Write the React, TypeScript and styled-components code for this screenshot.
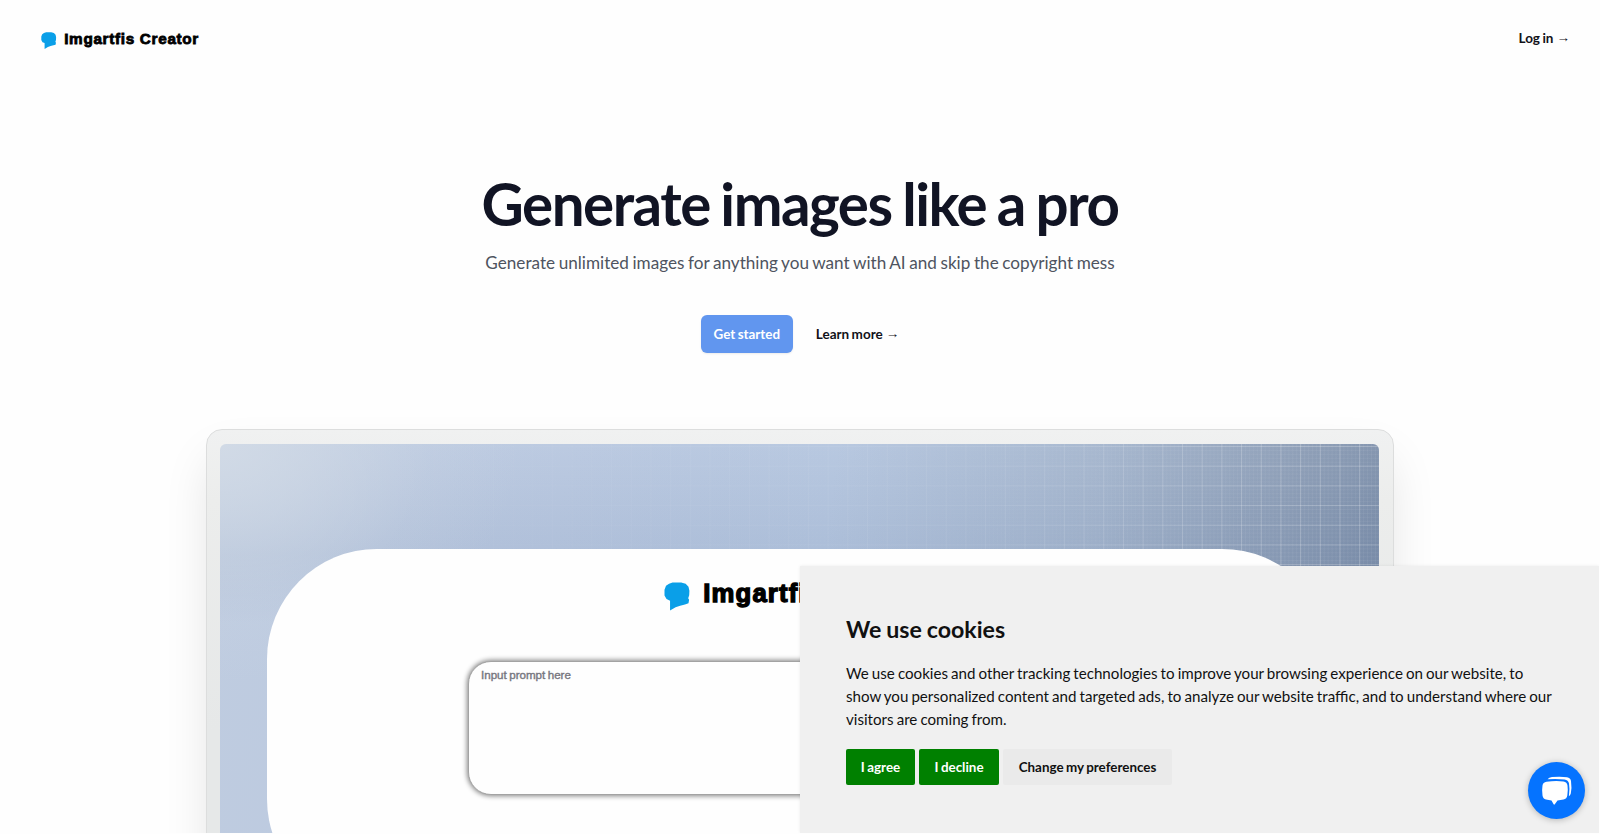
import React from 'react';
import styled, { createGlobalStyle } from 'styled-components';

const GlobalStyle = createGlobalStyle`
  *, *::before, *::after { box-sizing: border-box; }
  html, body { margin: 0; padding: 0; background: #fefefe; }
  body { font-family: Lato, "Liberation Sans", sans-serif; color: #111827; word-spacing: -0.8px; overflow: hidden; }
  h1, h2, p { margin: 0; }
  button { font: inherit; word-spacing: inherit; border: 0; cursor: pointer; }
`;

const Page = styled.div`
  height: 833px;
  display: flex;
  flex-direction: column;
  overflow: hidden;
`;

const Header = styled.header`
  height: 78px;
  flex: none;
  display: flex;
  justify-content: space-between;
  align-items: flex-start;
  padding: 32px 30px 0 41px;
`;

const Brand = styled.div<{ $scale: number }>`
  display: flex;
  align-items: flex-start;
  gap: ${p => 7.6 * p.$scale}px;
  svg {
    display: block;
    width: ${p => 15.6 * p.$scale}px;
    height: ${p => 17 * p.$scale}px;
  }
`;

const BrandName = styled.span<{ $scale: number }>`
  font: 700 ${p => 15.3 * p.$scale}px/${p => 14 * p.$scale}px "Liberation Sans", Arial, sans-serif;
  letter-spacing: ${p => 0.68 * p.$scale}px;
  word-spacing: 0;
  -webkit-text-stroke: ${p => 0.8 * p.$scale}px #000;
  color: #000;
  white-space: nowrap;
`;

const TextLink = styled.a`
  display: flex;
  align-items: center;
  gap: 3px;
  font-size: 13.5px;
  line-height: 24px;
  font-weight: 700;
  color: #111118;
  white-space: nowrap;
`;

const LoginLink = styled(TextLink)`
  margin-top: -6px;
`;

const Arrow = styled.span`
  font: 400 13.5px/22px "Liberation Sans", sans-serif;
`;

const Hero = styled.section`
  flex: none;
  height: 351px;
  padding-top: 93px;
  display: flex;
  flex-direction: column;
  align-items: center;
`;

const Title = styled.h1`
  font-size: 58.3px;
  line-height: 64px;
  font-weight: 700;
  letter-spacing: -1.5px;
  word-spacing: -2.1px;
  color: #111424;
  white-space: nowrap;
`;

const Subtitle = styled.p`
  margin-top: 12px;
  font-size: 17.15px;
  line-height: 32px;
  color: #4e5460;
  white-space: nowrap;
`;

const Actions = styled.div`
  margin-top: 36px;
  display: flex;
  align-items: center;
  gap: 23px;
`;

const PrimaryButton = styled.button`
  width: 92px;
  height: 38px;
  padding: 0;
  border-radius: 6px;
  background: #6196ef;
  color: #fff;
  font-size: 13.4px;
  font-weight: 700;
  box-shadow: 0 1px 2px rgba(0, 0, 0, 0.08);
`;

const Frame = styled.section`
  flex: none;
  align-self: center;
  width: 1188px;
  height: 640px;
  padding: 14px 14px 14px 13px;
  border: 1px solid #dcdddd;
  border-radius: 16px;
  background: linear-gradient(180deg, #f0f1f1 0, #ecedec 70px, #e6e8e8 300px);
  box-shadow: 0 25px 50px -8px rgba(0, 0, 0, 0.13);
`;

const Artwork = styled.div`
  position: relative;
  height: 610px;
  border-radius: 6px;
  overflow: hidden;
  padding: 105px 47px 0;
  background:
    radial-gradient(ellipse 300px 240px at 0 0, #d1dae6 0, rgba(209, 218, 230, 0.65) 30%, rgba(209, 218, 230, 0.15) 70%, rgba(209, 218, 230, 0) 100%),
    linear-gradient(180deg, rgba(255, 255, 255, 0.04), rgba(60, 90, 140, 0.08) 110px, rgba(60, 90, 140, 0) 180px),
    linear-gradient(97deg, #bfcce0 0, #b9c8e0 28%, #b5c6df 50%, #a4b5cd 72%, #8b9cb5 88%, #7588a4 100%);

  &::before {
    content: "";
    position: absolute;
    inset: 0;
    background-image:
      linear-gradient(90deg, rgba(255, 255, 255, 0.2) 1px, transparent 1px),
      linear-gradient(180deg, rgba(255, 255, 255, 0.2) 1px, transparent 1px),
      linear-gradient(90deg, rgba(255, 255, 255, 0.05) 1px, transparent 1px),
      linear-gradient(180deg, rgba(255, 255, 255, 0.05) 1px, transparent 1px);
    background-size: 19.7px 19.7px, 19.7px 19.7px, 3.94px 3.94px, 3.94px 3.94px;
    background-position: 17px 2px;
    mask-image: linear-gradient(90deg, transparent 5%, rgba(0, 0, 0, 0.16) 35%, rgba(0, 0, 0, 0.3) 65%, #000 92%);
  }
`;

const Panel = styled.div`
  position: relative;
  height: 360px;
  border-radius: 110px;
  background: #fefefe;
  display: flex;
  flex-direction: column;
  align-items: center;
  padding-top: 33px;
`;

const PanelLogo = styled.div`
  margin-right: 5px;
`;

const PromptBox = styled.div`
  width: 663px;
  height: 134px;
  margin-top: 50px;
  padding: 6px 12px;
  border-radius: 23px;
  border: 1px solid #a3a3a3;
  box-shadow: 0 0 5px 1px rgba(0, 0, 0, 0.48);
  background: #fefefe;
  font: 400 11.6px/14px "Liberation Sans", Arial, sans-serif;
  -webkit-text-stroke: 0.4px #777780;
  color: #777780;
`;

const Generate = styled.div`
  align-self: flex-start;
  width: 90px;
  height: 30px;
  margin: 38px 0 0 221px;
  border-radius: 4px;
  background: #e4eef9;
`;

const CookieNotice = styled.aside`
  position: absolute;
  left: 800px;
  top: 566px;
  width: 799px;
  height: 267px;
  padding: 47px 45px 0 46px;
  background: #f0f0f0;
  box-shadow: 0 0 3px rgba(0, 0, 0, 0.08);
  clip-path: inset(-4px 0 0 -4px);
  color: #111;
`;

const NoticeTitle = styled.h2`
  font-size: 23.2px;
  line-height: 32px;
  font-weight: 700;
`;

const NoticeText = styled.p`
  margin-top: 17px;
  font-size: 15.13px;
  line-height: 22.9px;
  white-space: nowrap;
`;

const NoticeActions = styled.div`
  margin-top: 18px;
  display: flex;
  gap: 4px;
`;

const NoticeButton = styled.button<{ $width: number; $plain?: boolean }>`
  width: ${p => p.$width}px;
  height: 36px;
  padding: 0;
  border-radius: 2px;
  background: ${p => (p.$plain ? '#eaeaea' : '#008000')};
  color: ${p => (p.$plain ? '#111' : '#fff')};
  font-size: 13.4px;
  font-weight: 700;
`;

const ChatButton = styled.button`
  position: absolute;
  left: 1528px;
  top: 762px;
  width: 57px;
  height: 57px;
  padding: 0;
  border-radius: 50%;
  background: #0573ff;
  box-shadow: 0 1px 6px rgba(0, 0, 0, 0.25);
  svg { display: block; }
`;

const Bubble = () => (
  <svg viewBox="0 0 26 28" fill="#0a9fe8" preserveAspectRatio="none">
    <path d="M5 1.8 8.5.6 17 .4l4.5 1.3 2.8 3 .9 4-.2 4.3-1 3 .9 1.5-.6 3.3-3.5 1.2L16 23.2l-4.500 1.600L6 28V18.300l-3.500-1.600L.5 13.200V7.500L2 3.800Z" />
  </svg>
);

const Logo = ({ scale }: { scale: number }) => (
  <Brand $scale={scale}>
    <Bubble />
    <BrandName $scale={scale}>Imgartfis Creator</BrandName>
  </Brand>
);

export default function App() {
  return (
    <Page>
      <GlobalStyle />
      <Header>
        <Logo scale={1} />
        <LoginLink>Log in <Arrow>→</Arrow></LoginLink>
      </Header>
      <Hero>
        <Title>Generate images like a pro</Title>
        <Subtitle>Generate unlimited images for anything you want with AI and skip the copyright mess</Subtitle>
        <Actions>
          <PrimaryButton>Get started</PrimaryButton>
          <TextLink>Learn more <Arrow>→</Arrow></TextLink>
        </Actions>
      </Hero>
      <Frame>
        <Artwork>
          <Panel>
            <PanelLogo><Logo scale={1.68} /></PanelLogo>
            <PromptBox>Input prompt here</PromptBox>
            <Generate />
          </Panel>
        </Artwork>
      </Frame>
      <CookieNotice>
        <NoticeTitle>We use cookies</NoticeTitle>
        <NoticeText>
          We use cookies and other tracking technologies to improve your browsing experience on our website, to
          <br />
          show you personalized content and targeted ads, to analyze our website traffic, and to understand where our
          <br />
          visitors are coming from.
        </NoticeText>
        <NoticeActions>
          <NoticeButton $width={69}>I agree</NoticeButton>
          <NoticeButton $width={80}>I decline</NoticeButton>
          <NoticeButton $width={169} $plain>Change my preferences</NoticeButton>
        </NoticeActions>
      </CookieNotice>
      <ChatButton aria-label="Open chat">
        <svg width="57" height="57" viewBox="0 0 57 57" fill="#fff">
          <path d="M18.500 19.800Q28 18.200 35.500 19.500 39 20 39.500 23.500 40.200 28 39.300 33.500 38.800 37 35.500 37.600L29.500 38.400 26.800 42.300Q26.200 43 25.600 42.300L23.500 38.400 18 37.600Q15 37 14.500 33.500 13.700 28 14.500 23.500 15 20.300 18.500 19.800Z" />
          <path d="M19.500 17.300Q21 15.300 24 15.100 32 14.200 39 15.200 42.500 15.700 43 19 44 26 42.800 31.500 42.400 33.300 40.900 34.200 42 27 41 21.500 40.300 18 36.500 17.500 28 16.500 19.500 17.300Z" />
        </svg>
      </ChatButton>
    </Page>
  );
}
